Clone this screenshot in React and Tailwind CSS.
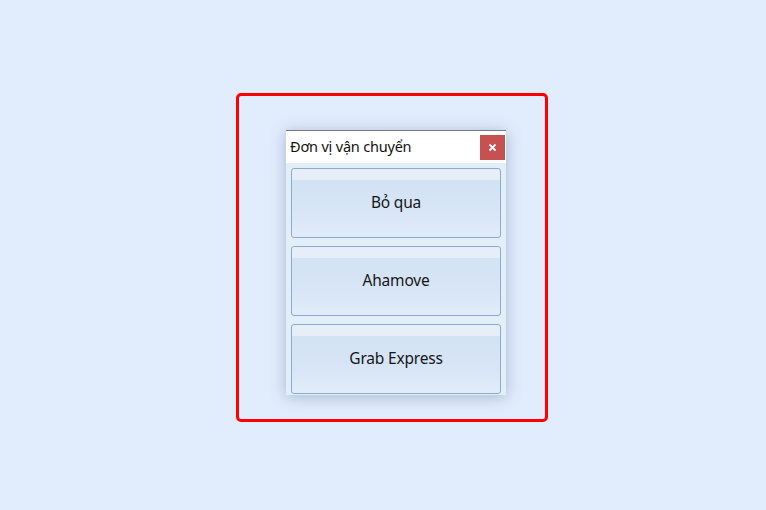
import React from 'react';

const carriers = ['Bỏ qua', 'Ahamove', 'Grab Express'];

const App = () => {
  return (
    <div className="w-[766px] h-[510px] bg-[#e1edfd] pl-[236px] pt-[93px]" style={{ fontFamily: '"Noto Sans", "Open Sans", sans-serif' }}>
      <div className="w-[312px] h-[329px] border-[3px] border-[#ff0000] rounded-[5px] pl-[47px] pt-[34px]">
        <div className="w-[220px] bg-[#e3eefb] border-t border-[#7a7a7a] shadow-[0_2px_14px_rgba(60,80,120,0.35)]">
          <div className="h-[32px] bg-white flex items-center justify-between pl-[4px] pr-[1px]">
            <span className="text-[14.5px] text-[#111] tracking-[-0.2px]">Đơn vị vận chuyển</span>
            <button className="w-[25px] h-[25px] bg-[#c75050] flex items-center justify-center">
              <svg width="9" height="9" viewBox="0 0 9 9">
                <path d="M1.5 1.5 L7.5 7.5 M7.5 1.5 L1.5 7.5" stroke="#fff" strokeWidth="1.8" />
              </svg>
            </button>
          </div>
          <div className="flex flex-col gap-[8px] pt-[5px] pl-[5px] pr-[5px] pb-[1px]">
            {carriers.map(name => (
              <button
                key={name}
                className="h-[70px] w-[210px] rounded-[3px] border border-[#8fa8cc] bg-[linear-gradient(to_bottom,#e6eefa_0%,#e6eefa_16%,#d3e2f4_17%,#d7e5f6_60%,#e2ecf9_100%)] flex items-center justify-center text-[15.5px] text-[#161616] tracking-[-0.2px]"
              >
                {name}
              </button>
            ))}
          </div>
        </div>
      </div>
    </div>
  );
};

export default App;
